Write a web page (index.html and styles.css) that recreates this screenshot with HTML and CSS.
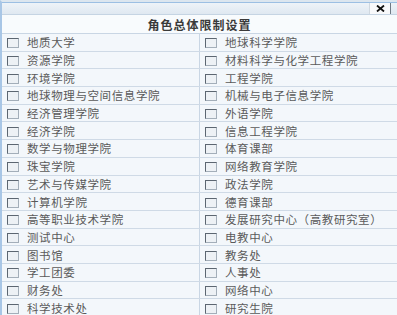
FILE: index.html
```html
<!DOCTYPE html>
<html lang="zh-CN">
<head>
  <meta charset="UTF-8">
  <title>角色总体限制设置</title>
  <link rel="stylesheet" href="styles.css">
</head>
<body>
  <div class="dlg">
    <div class="titlebar">
      <span class="close">
        <svg width="9" height="7" viewBox="0 0 9 7"><path d="M1 0.5 L8 6.5 M8 0.5 L1 6.5" stroke="#111" stroke-width="1.8" fill="none"/></svg>
      </span>
    </div>
    <table class="grid">
      <thead>
        <tr><th colspan="2">角色总体限制设置</th></tr>
      </thead>
      <tbody>
        <tr><td><span class="cb"></span>地质大学</td><td><span class="cb"></span>地球科学学院</td></tr>
        <tr><td><span class="cb"></span>资源学院</td><td><span class="cb"></span>材料科学与化学工程学院</td></tr>
        <tr><td><span class="cb"></span>环境学院</td><td><span class="cb"></span>工程学院</td></tr>
        <tr><td><span class="cb"></span>地球物理与空间信息学院</td><td><span class="cb"></span>机械与电子信息学院</td></tr>
        <tr><td><span class="cb"></span>经济管理学院</td><td><span class="cb"></span>外语学院</td></tr>
        <tr><td><span class="cb"></span>经济学院</td><td><span class="cb"></span>信息工程学院</td></tr>
        <tr><td><span class="cb"></span>数学与物理学院</td><td><span class="cb"></span>体育课部</td></tr>
        <tr><td><span class="cb"></span>珠宝学院</td><td><span class="cb"></span>网络教育学院</td></tr>
        <tr><td><span class="cb"></span>艺术与传媒学院</td><td><span class="cb"></span>政法学院</td></tr>
        <tr><td><span class="cb"></span>计算机学院</td><td><span class="cb"></span>德育课部</td></tr>
        <tr><td><span class="cb"></span>高等职业技术学院</td><td><span class="cb"></span>发展研究中心（高教研究室）</td></tr>
        <tr><td><span class="cb"></span>测试中心</td><td><span class="cb"></span>电教中心</td></tr>
        <tr><td><span class="cb"></span>图书馆</td><td><span class="cb"></span>教务处</td></tr>
        <tr><td><span class="cb"></span>学工团委</td><td><span class="cb"></span>人事处</td></tr>
        <tr><td><span class="cb"></span>财务处</td><td><span class="cb"></span>网络中心</td></tr>
        <tr><td><span class="cb"></span>科学技术处</td><td><span class="cb"></span>研究生院</td></tr>
      </tbody>
    </table>
  </div>
</body>
</html>
```

FILE: styles.css
```css
body { margin: 0; background: #f4f7fb; font-family: "Noto Sans CJK SC", "DejaVu Sans", sans-serif; color: #5a5a5a; }
.dlg { border-left: 2px solid #a8c6e6; border-top: 2px solid #dce6ef; height: 313px; overflow: hidden; }
.titlebar { height: 11px; background: linear-gradient(#eef3f8, #dfe8f1); border-top: 1px solid #9cbfe3; border-bottom: 1px solid #c5d4e3; display: flex; justify-content: flex-end; }
.close { width: 20px; height: 11px; margin-right: 6px; background: #f8f9fb; border-right: 1px solid #6f7a85; border-left: 1px solid #d0d8e0; display: flex; align-items: center; justify-content: center; }
.grid { width: 100%; border-collapse: collapse; table-layout: fixed; }
.grid th { height: 18px; padding: 0; font-size: 12px; font-weight: bold; color: #3a3a3a; background: #f8fbfd; border-bottom: 1px solid #c9d6e4; letter-spacing: 1px; }
.grid td { height: 16.7px; padding: 0 0 0 5px; font-size: 11.5px; line-height: 16px; letter-spacing: 0.6px; white-space: nowrap; overflow: hidden; border-bottom: 1px solid #cfdae6; background: #f3f7fb; }
.grid td:first-child { width: 190px; border-right: 1px solid #c9d6e4; }
.cb { display: inline-block; width: 10px; height: 8px; margin-right: 8px; vertical-align: -1px; border: 1px solid #5c6671; border-right-color: #a3aeb9; border-bottom-color: #a3aeb9; background: #edf1f5; }
```
